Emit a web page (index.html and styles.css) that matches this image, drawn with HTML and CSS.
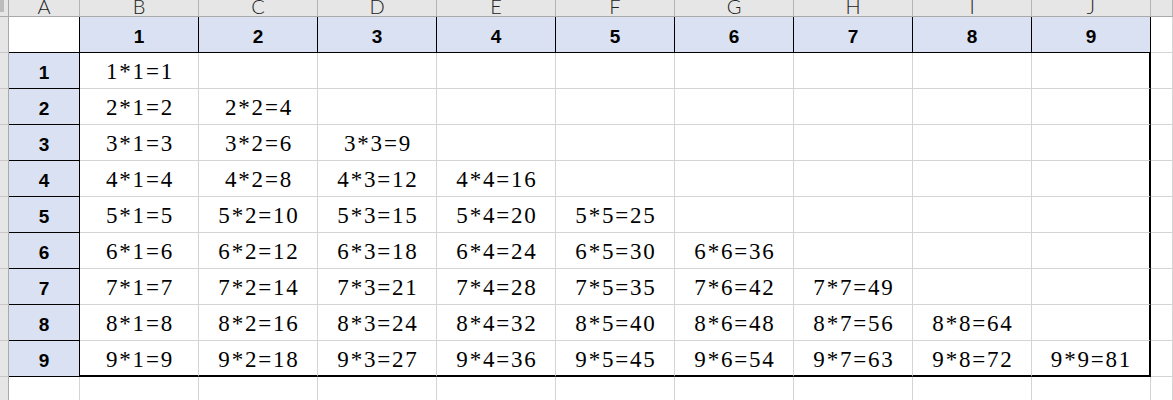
FILE: index.html
```html
<!DOCTYPE html>
<html lang="en">
<head>
<meta charset="utf-8">
<title>Multiplication table</title>
<link rel="stylesheet" href="styles.css">
</head>
<body>
<div class="sheet">
  <div class="strip corner"><div class="grip"></div></div>
  <div class="colhead"><span>A</span></div>
  <div class="colhead"><span>B</span></div>
  <div class="colhead"><span>C</span></div>
  <div class="colhead"><span>D</span></div>
  <div class="colhead"><span>E</span></div>
  <div class="colhead"><span>F</span></div>
  <div class="colhead"><span>G</span></div>
  <div class="colhead"><span>H</span></div>
  <div class="colhead"><span>I</span></div>
  <div class="colhead"><span>J</span></div>
  <div class="colhead"></div>

  <div class="strip"></div>
  <div class="blank"></div>
  <div class="th">1</div><div class="th">2</div><div class="th">3</div><div class="th">4</div><div class="th">5</div><div class="th">6</div><div class="th">7</div><div class="th">8</div><div class="th">9</div>
  <div class="cell"></div>

  <div class="strip"></div>
  <div class="rh">1</div>
  <div class="d">1*1=1</div><div class="d"></div><div class="d"></div><div class="d"></div><div class="d"></div><div class="d"></div><div class="d"></div><div class="d"></div><div class="d last"></div>
  <div class="cell"></div>

  <div class="strip"></div>
  <div class="rh">2</div>
  <div class="d">2*1=2</div><div class="d">2*2=4</div><div class="d"></div><div class="d"></div><div class="d"></div><div class="d"></div><div class="d"></div><div class="d"></div><div class="d last"></div>
  <div class="cell"></div>

  <div class="strip"></div>
  <div class="rh">3</div>
  <div class="d">3*1=3</div><div class="d">3*2=6</div><div class="d">3*3=9</div><div class="d"></div><div class="d"></div><div class="d"></div><div class="d"></div><div class="d"></div><div class="d last"></div>
  <div class="cell"></div>

  <div class="strip"></div>
  <div class="rh">4</div>
  <div class="d">4*1=4</div><div class="d">4*2=8</div><div class="d">4*3=12</div><div class="d">4*4=16</div><div class="d"></div><div class="d"></div><div class="d"></div><div class="d"></div><div class="d last"></div>
  <div class="cell"></div>

  <div class="strip"></div>
  <div class="rh">5</div>
  <div class="d">5*1=5</div><div class="d">5*2=10</div><div class="d">5*3=15</div><div class="d">5*4=20</div><div class="d">5*5=25</div><div class="d"></div><div class="d"></div><div class="d"></div><div class="d last"></div>
  <div class="cell"></div>

  <div class="strip"></div>
  <div class="rh">6</div>
  <div class="d">6*1=6</div><div class="d">6*2=12</div><div class="d">6*3=18</div><div class="d">6*4=24</div><div class="d">6*5=30</div><div class="d">6*6=36</div><div class="d"></div><div class="d"></div><div class="d last"></div>
  <div class="cell"></div>

  <div class="strip"></div>
  <div class="rh">7</div>
  <div class="d">7*1=7</div><div class="d">7*2=14</div><div class="d">7*3=21</div><div class="d">7*4=28</div><div class="d">7*5=35</div><div class="d">7*6=42</div><div class="d">7*7=49</div><div class="d"></div><div class="d last"></div>
  <div class="cell"></div>

  <div class="strip"></div>
  <div class="rh">8</div>
  <div class="d">8*1=8</div><div class="d">8*2=16</div><div class="d">8*3=24</div><div class="d">8*4=32</div><div class="d">8*5=40</div><div class="d">8*6=48</div><div class="d">8*7=56</div><div class="d">8*8=64</div><div class="d last"></div>
  <div class="cell"></div>

  <div class="strip"></div>
  <div class="rh">9</div>
  <div class="d bottom">9*1=9</div><div class="d bottom">9*2=18</div><div class="d bottom">9*3=27</div><div class="d bottom">9*4=36</div><div class="d bottom">9*5=45</div><div class="d bottom">9*6=54</div><div class="d bottom">9*7=63</div><div class="d bottom">9*8=72</div><div class="d bottom last">9*9=81</div>
  <div class="cell"></div>

  <div class="strip"></div>
  <div class="cell"></div><div class="cell"></div><div class="cell"></div><div class="cell"></div><div class="cell"></div><div class="cell"></div><div class="cell"></div><div class="cell"></div><div class="cell"></div><div class="cell"></div><div class="cell"></div>
</div>
</body>
</html>
```

FILE: styles.css
```css
* { box-sizing: border-box; }
html, body { margin: 0; padding: 0; background: #fff; overflow: hidden; }

.sheet {
  display: grid;
  grid-template-columns: 9px 71px repeat(9, 119px) 22px;
  grid-template-rows: 17px repeat(10, 36px) 30px;
  width: 1173px;
  height: 400px;
  overflow: hidden;
}

.strip {
  background: #e6e6e6;
  border-right: 1px solid #a9a9a9;
  border-bottom: 1px solid #c8c8c8;
}
.corner {
  border-bottom-color: #a9a9a9;
}
.grip {
  width: 4px;
  height: 12px;
  background: #bcbcbc;
}

.colhead {
  background: #e6e6e6;
  border-right: 1px solid #b4b4b4;
  border-bottom: 1px solid #a9a9a9;
  overflow: hidden;
  display: flex;
  justify-content: center;
  align-items: flex-end;
  font-family: "Lato", "Liberation Sans", sans-serif;
  font-weight: 300;
  font-size: 20px;
  color: #222;
}
.colhead span {
  line-height: 20px;
  margin-bottom: 0px;
}

.blank {
  background: #fff;
  border-right: 1px solid #000;
  border-bottom: 1px solid #000;
}

.th, .rh {
  background: #d9e1f2;
  border-right: 1px solid #000;
  border-bottom: 1px solid #000;
  display: flex;
  justify-content: center;
  align-items: center;
  padding-top: 4px;
  font-family: "Liberation Sans", Arial, sans-serif;
  font-weight: bold;
  font-size: 19px;
  color: #000;
}

.d {
  border-right: 1px solid #d4d4d4;
  border-bottom: 1px solid #d4d4d4;
  display: flex;
  justify-content: center;
  align-items: center;
  padding-top: 3px;
  padding-left: 2px;
  font-family: "Liberation Serif", "Times New Roman", serif;
  font-size: 23px;
  letter-spacing: 1.8px;
  color: #000;
  white-space: nowrap;
}
.d.last { border-right: 2px solid #000; }
.d.bottom { border-bottom: 2px solid #000; }

.cell {
  border-right: 1px solid #d4d4d4;
  border-bottom: 1px solid #d4d4d4;
}
```
